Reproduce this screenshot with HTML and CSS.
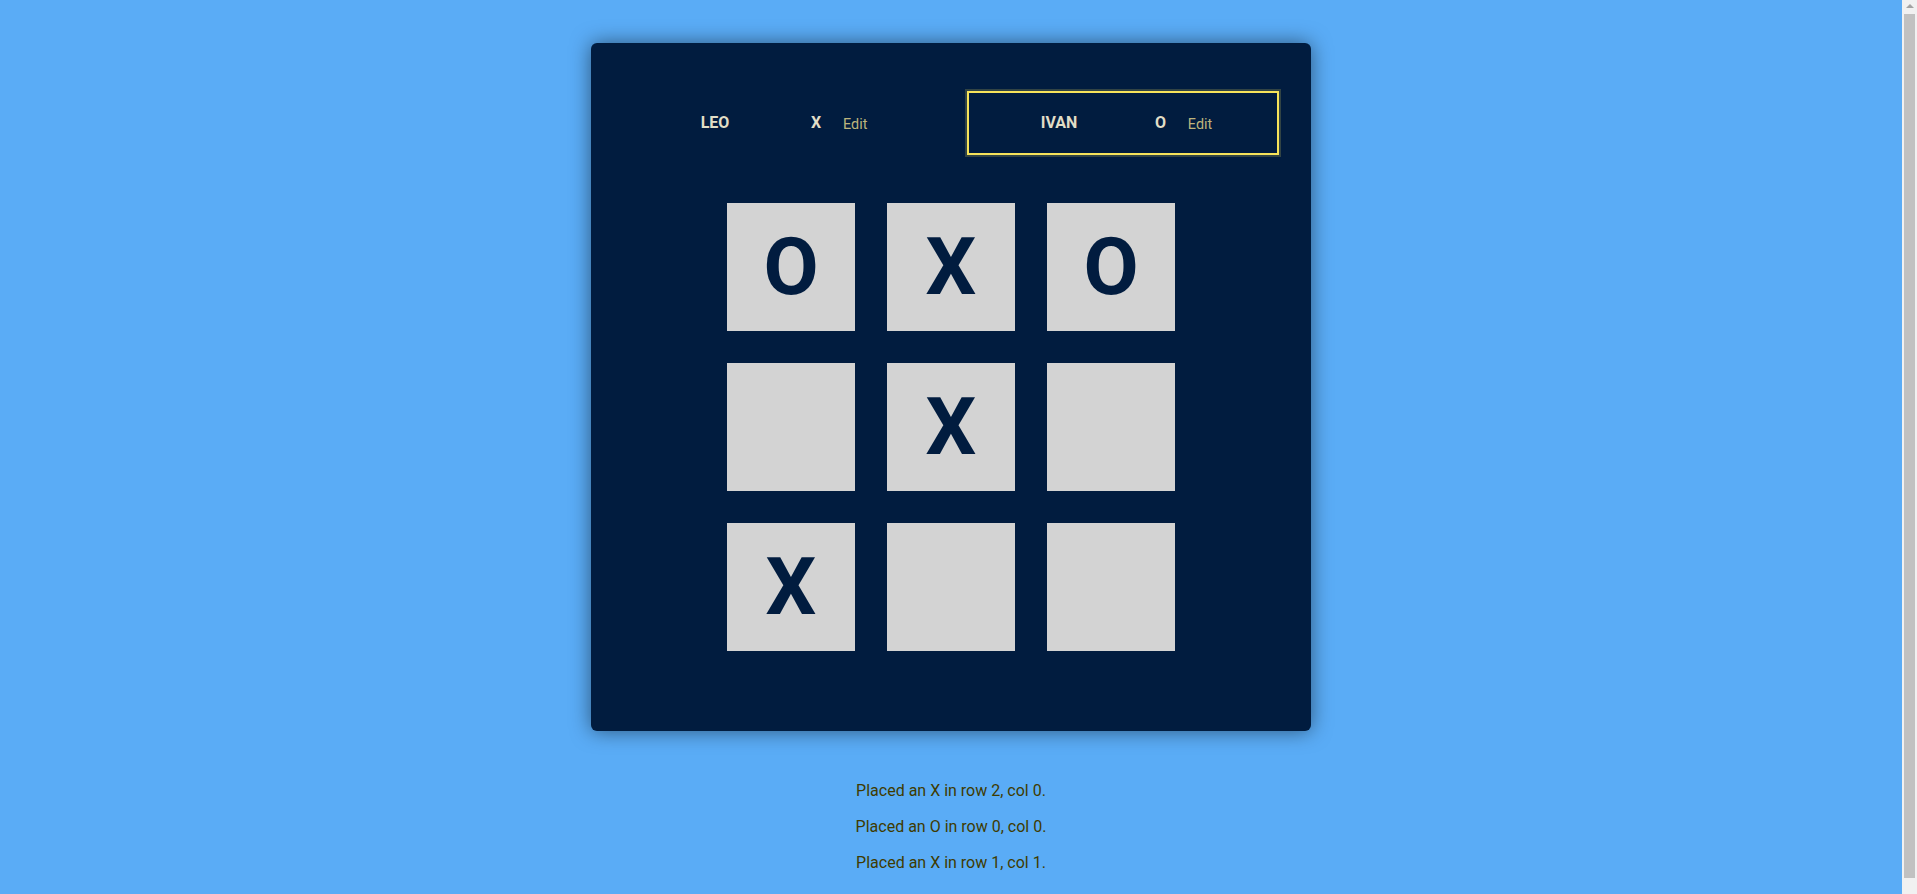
FILE: index.html
```html
<!DOCTYPE html>
<html lang="en">
<head>
<meta charset="utf-8">
<title>Tic-Tac-Toe</title>
<link rel="stylesheet" href="styles.css">
</head>
<body>
<main>
  <div class="game-container">
    <ol class="players highlight-player">
      <li class="player-item">
        <span class="player"><span class="player-name">Leo</span><span class="player-symbol">X</span></span>
        <button class="edit-btn">Edit</button>
      </li>
      <li class="player-item active">
        <span class="player"><span class="player-name">Ivan</span><span class="player-symbol">O</span></span>
        <button class="edit-btn">Edit</button>
      </li>
    </ol>
    <ol class="game-board">
      <li><ol class="board-row">
        <li><button class="cell">O</button></li>
        <li><button class="cell">X</button></li>
        <li><button class="cell">O</button></li>
      </ol></li>
      <li><ol class="board-row">
        <li><button class="cell"></button></li>
        <li><button class="cell">X</button></li>
        <li><button class="cell"></button></li>
      </ol></li>
      <li><ol class="board-row">
        <li><button class="cell">X</button></li>
        <li><button class="cell"></button></li>
        <li><button class="cell"></button></li>
      </ol></li>
    </ol>
  </div>
  <ol class="log">
    <li>Placed an X in row 2, col 0.</li>
    <li>Placed an O in row 0, col 0.</li>
    <li>Placed an X in row 1, col 1.</li>
  </ol>
</main>
<div class="scrollbar" aria-hidden="true">
  <div class="scroll-arrow"></div>
  <div class="scroll-thumb"></div>
</div>
</body>
</html>
```
FILE: styles.css
```css
* {
  box-sizing: border-box;
}

html {
  font-family: Roboto, "Liberation Sans", Arial, sans-serif;
  line-height: 1.5;
}

body {
  margin: 0;
  padding: 43px 15px 0 0;
  background: #5aacf6;
  color: #e1dec7;
}

.game-container {
  max-width: 45rem;
  margin: 0 auto;
  padding: 2rem;
  border-radius: 6px;
  background: #011c3f;
  box-shadow: 0 0 20px rgba(0, 0, 0, 0.5);
}

.players {
  list-style: none;
  padding: 0;
  margin: 1rem 0;
  display: flex;
  justify-content: space-between;
  align-items: center;
  gap: 2rem;
}

.player-item {
  display: flex;
  align-items: center;
  width: 50%;
  border: 2px solid transparent;
}

.player-item.active {
  border-color: #f6e35a;
  box-shadow: 0 0 0 2px rgba(246, 227, 90, 0.2);
}

.player {
  border: 2px solid transparent;
  padding: 0.5rem;
  border-radius: 4px;
  font-weight: bold;
}

.player-name {
  display: inline-block;
  width: 10rem;
  font-size: 1rem;
  color: #e1dec7;
  text-transform: uppercase;
  margin: 0;
  padding: 0.5rem;
  text-align: center;
}

.player-symbol {
  margin-left: 1rem;
  font-size: 1rem;
  color: #e1dec7;
}

.edit-btn {
  width: 3rem;
  border: none;
  background: none;
  color: #bdb47c;
  font-family: inherit;
  font-size: 0.9rem;
  line-height: 1.5;
  padding: 0.5rem 0.25rem 0.25rem 0.25rem;
  text-align: center;
  cursor: pointer;
}

.game-board {
  list-style: none;
  padding: 0;
  margin: 3rem 0;
  display: flex;
  flex-direction: column;
  gap: 2rem;
  align-items: center;
}

.board-row {
  list-style: none;
  margin: 0;
  padding: 0;
  display: flex;
  gap: 2rem;
}

.cell {
  display: block;
  width: 8rem;
  height: 8rem;
  border: none;
  background: #d3d3d3;
  color: #011c3f;
  font-family: inherit;
  font-size: 5rem;
  font-weight: bold;
  line-height: 1;
  padding: 1rem;
  cursor: pointer;
}

.log {
  max-width: 20rem;
  color: #3f3b00;
  list-style: none;
  margin: 3rem auto 2rem;
  padding: 0;
  text-align: center;
}

.log li {
  margin: 0.75rem;
}

.scrollbar {
  position: fixed;
  top: 0;
  right: 0;
  bottom: 0;
  width: 15px;
  background: #f1f1f1;
  display: flex;
  flex-direction: column;
  align-items: center;
  padding: 4px 2px 16px;
  gap: 6px;
}

.scroll-arrow {
  width: 0;
  height: 0;
  border-left: 4px solid transparent;
  border-right: 4px solid transparent;
  border-bottom: 4px solid #a3a3a3;
}

.scroll-thumb {
  flex: 1;
  width: 100%;
  background: #c1c1c1;
}
```
